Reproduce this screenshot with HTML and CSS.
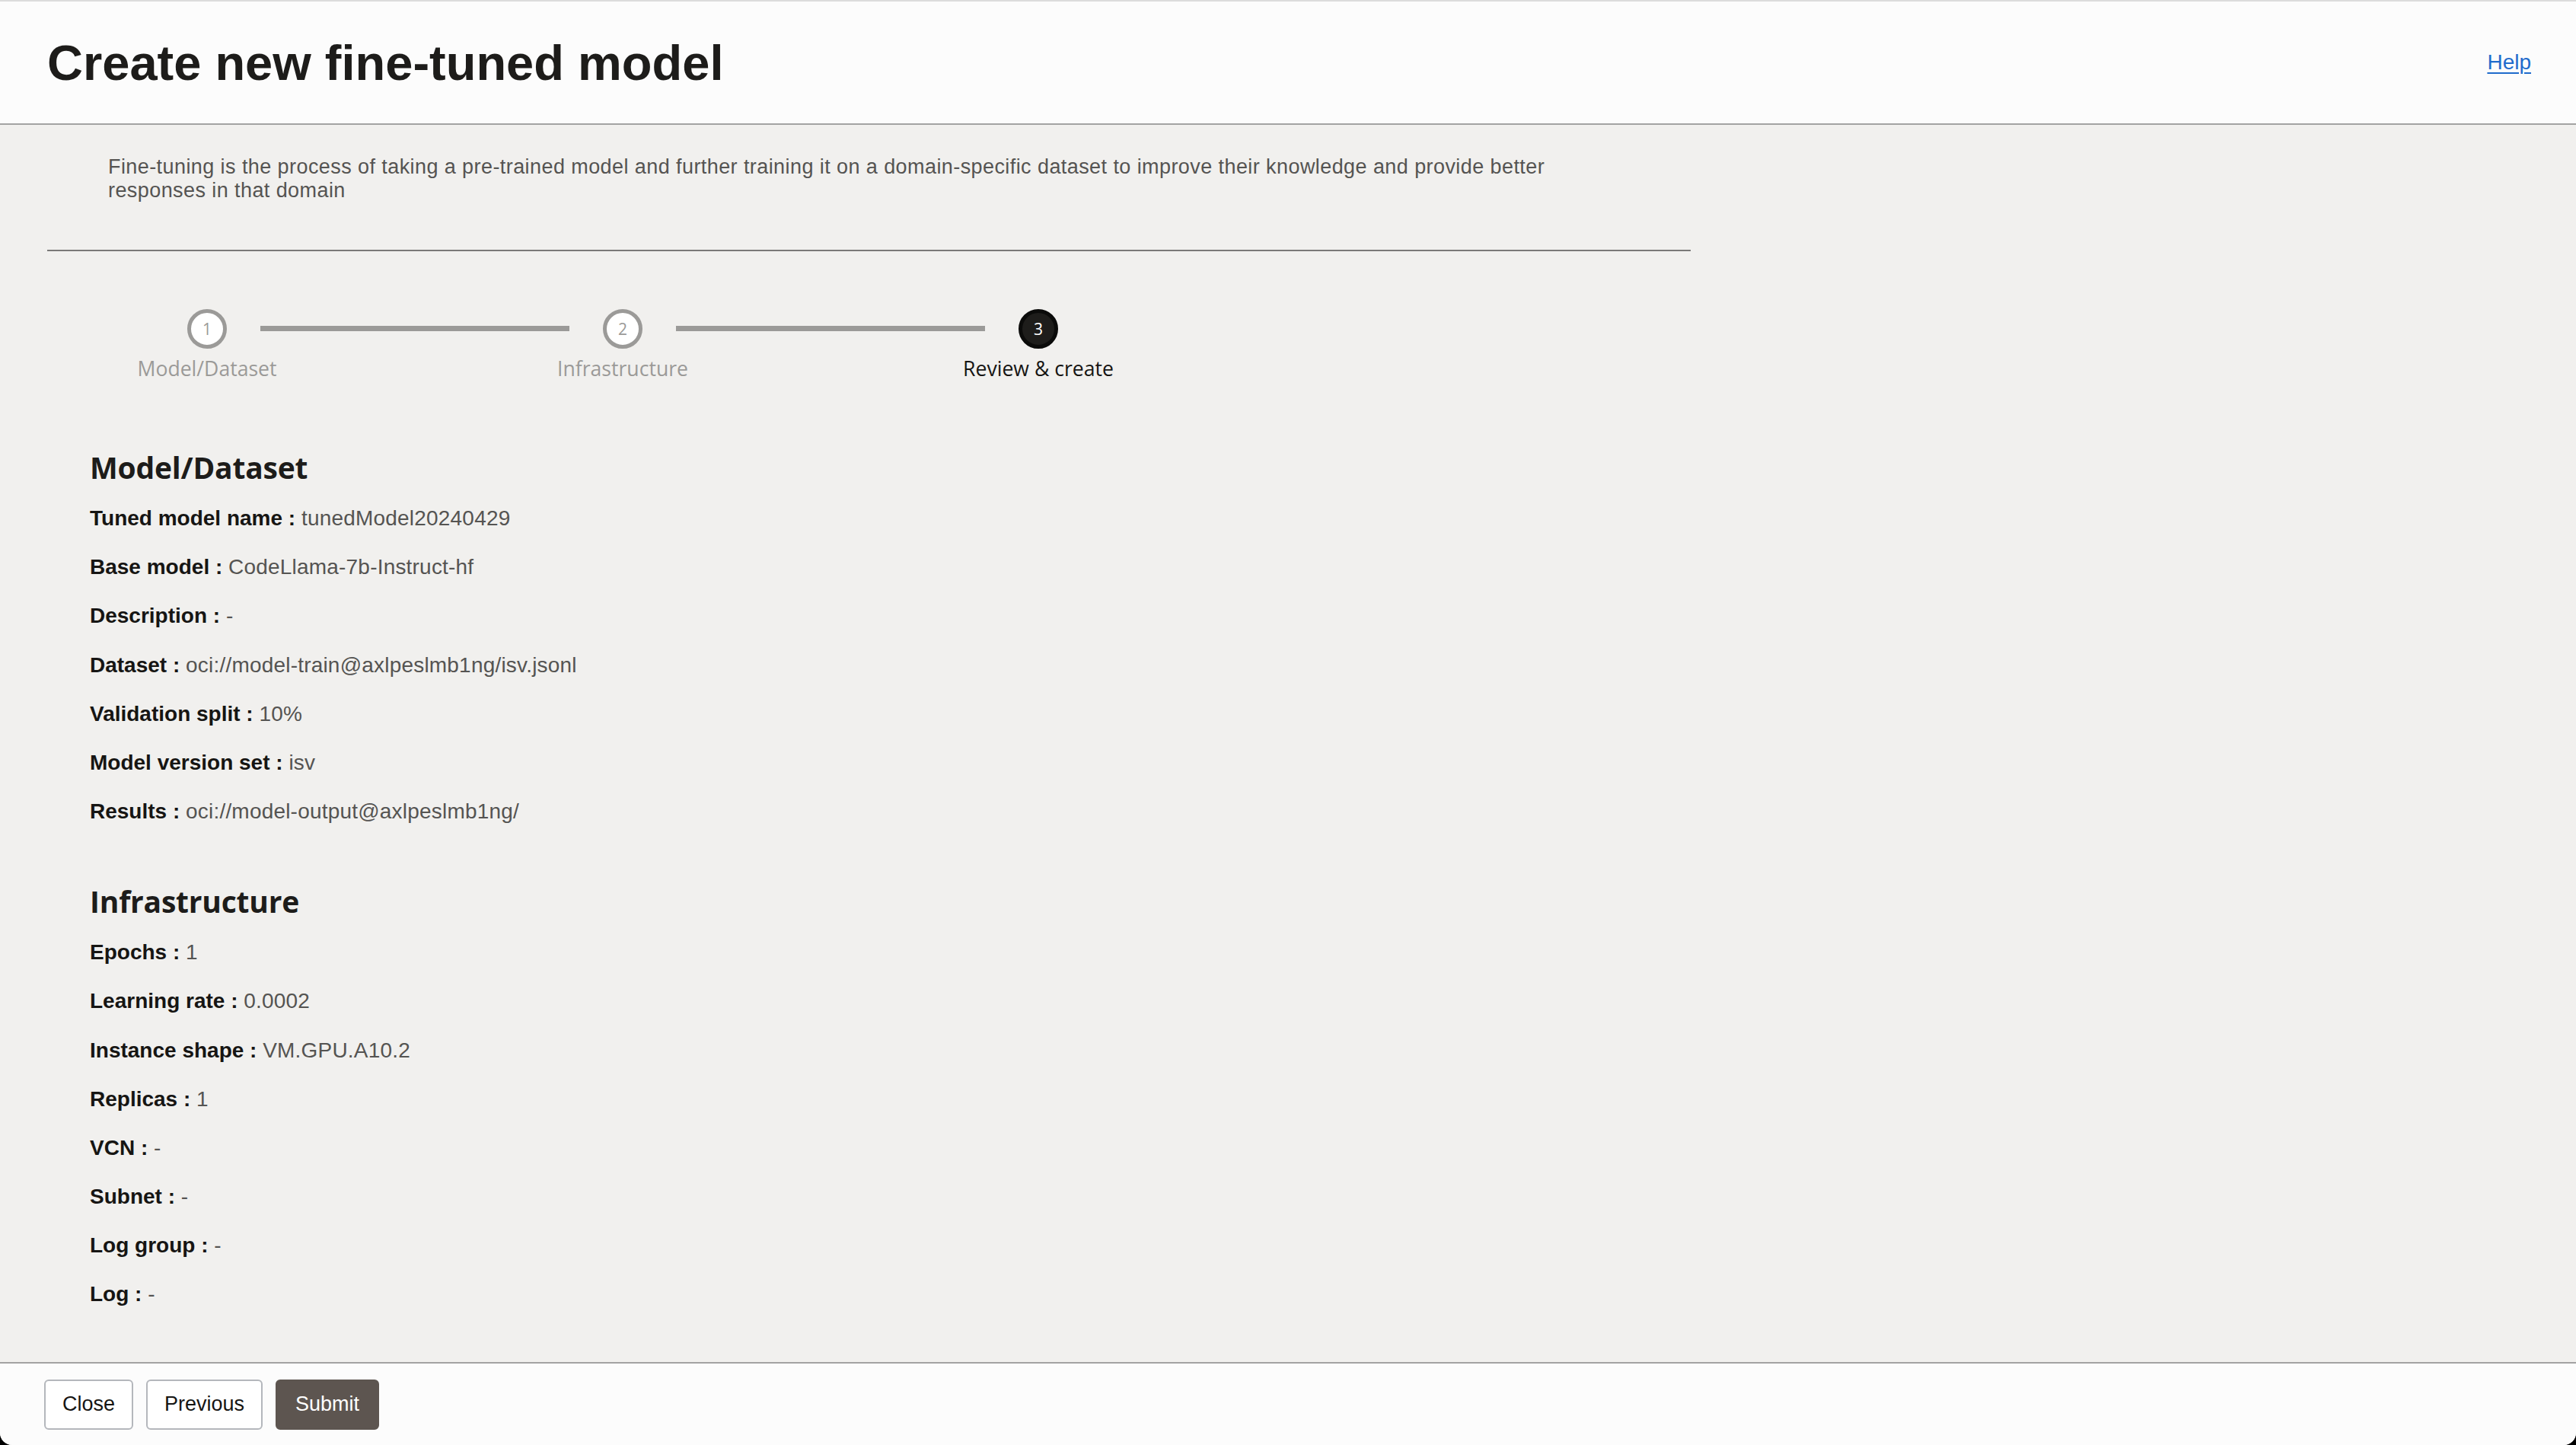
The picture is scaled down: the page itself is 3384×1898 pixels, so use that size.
FILE: index.html
```html
<!DOCTYPE html>
<html lang="en">
<head>
<meta charset="utf-8">
<title>Create new fine-tuned model</title>
<link rel="stylesheet" href="styles.css">
</head>
<body>
<div class="page">
  <header class="header">
    <h1 class="title">Create new fine-tuned model</h1>
    <a class="help" href="#">Help</a>
  </header>
  <main class="main">
    <div class="content">
      <p class="desc">Fine-tuning is the process of taking a pre-trained model and further training it on a domain-specific dataset to improve their knowledge and provide better responses in that domain</p>
      <div class="divider"></div>
      <ol class="stepper">
        <li class="step"><span class="dot">1</span><span class="step-label">Model/Dataset</span></li>
        <li class="connector"></li>
        <li class="step"><span class="dot">2</span><span class="step-label">Infrastructure</span></li>
        <li class="connector"></li>
        <li class="step active"><span class="dot">3</span><span class="step-label">Review &amp; create</span></li>
      </ol>
      <section class="review">
        <h2 class="review-title">Model/Dataset</h2>
        <div class="rows">
          <div class="row"><span class="k">Tuned model name :</span> <span class="v">tunedModel20240429</span></div>
          <div class="row"><span class="k">Base model :</span> <span class="v">CodeLlama-7b-Instruct-hf</span></div>
          <div class="row"><span class="k">Description :</span> <span class="v">-</span></div>
          <div class="row"><span class="k">Dataset :</span> <span class="v">oci://model-train@axlpeslmb1ng/isv.jsonl</span></div>
          <div class="row"><span class="k">Validation split :</span> <span class="v">10%</span></div>
          <div class="row"><span class="k">Model version set :</span> <span class="v">isv</span></div>
          <div class="row"><span class="k">Results :</span> <span class="v">oci://model-output@axlpeslmb1ng/</span></div>
        </div>
      </section>
      <section class="review second">
        <h2 class="review-title">Infrastructure</h2>
        <div class="rows">
          <div class="row"><span class="k">Epochs :</span> <span class="v">1</span></div>
          <div class="row"><span class="k">Learning rate :</span> <span class="v">0.0002</span></div>
          <div class="row"><span class="k">Instance shape :</span> <span class="v">VM.GPU.A10.2</span></div>
          <div class="row"><span class="k">Replicas :</span> <span class="v">1</span></div>
          <div class="row"><span class="k">VCN :</span> <span class="v">-</span></div>
          <div class="row"><span class="k">Subnet :</span> <span class="v">-</span></div>
          <div class="row"><span class="k">Log group :</span> <span class="v">-</span></div>
          <div class="row"><span class="k">Log :</span> <span class="v">-</span></div>
        </div>
      </section>
    </div>
  </main>
  <footer class="footer">
    <button class="btn">Close</button>
    <button class="btn">Previous</button>
    <button class="btn primary">Submit</button>
  </footer>
</div>
</body>
</html>
```

FILE: styles.css
```css
html {
  background: #000;
}
body {
  margin: 0;
  font-family: "Liberation Sans", Arial, sans-serif;
  color: #161513;
}
.page {
  height: 100vh;
  display: flex;
  flex-direction: column;
  background: #f1f0ee;
  border-bottom-left-radius: 16px;
  border-bottom-right-radius: 16px;
  overflow: hidden;
}
.header {
  flex: 0 0 auto;
  height: 160px;
  display: flex;
  align-items: center;
  justify-content: space-between;
  padding: 0 59px 0 62px;
  background: #fcfcfc;
  border-top: 2px solid #dcdcdc;
  border-bottom: 2px solid #a3a3a3;
}
.title {
  margin: 0;
  font-size: 65px;
  font-weight: 700;
  line-height: 1;
  color: #1d1c1a;
  letter-spacing: 0;
}
.help {
  font-size: 28px;
  color: #1f6bcc;
  text-decoration: underline;
  text-underline-offset: 4px;
  text-decoration-thickness: 2px;
}
.main {
  flex: 1 1 auto;
  overflow: hidden;
  padding-left: 62px;
}
.content {
  width: 2159px;
}
.desc {
  margin: 40px 0 0 80px;
  width: 1980px;
  font-size: 27px;
  line-height: 31px;
  letter-spacing: 0.42px;
  color: #555452;
}
.divider {
  margin-top: 62px;
  border-top: 2px solid #7a7978;
}
.stepper {
  list-style: none;
  margin: 76px 0 0 0;
  padding: 0 0 0 140px;
  display: flex;
  align-items: flex-start;
}
.step {
  width: 140px;
  display: flex;
  flex-direction: column;
  align-items: center;
}
.dot {
  box-sizing: border-box;
  width: 52px;
  height: 52px;
  border-radius: 50%;
  border: 5px solid #9b9a98;
  background: #fff;
  color: #9b9a98;
  font-family: "Open Sans", sans-serif;
  font-size: 21px;
  display: flex;
  align-items: center;
  justify-content: center;
}
.step-label {
  margin-top: 8px;
  white-space: nowrap;
  font-family: "Open Sans", sans-serif;
  font-size: 26.6px;
  line-height: 36px;
  color: #9b9a98;
}
.step.active .dot {
  background: #1e1d1b;
  border-color: #0b0b0a;
  color: #fff;
}
.step.active .step-label {
  color: #161513;
}
.connector {
  width: 406px;
  height: 7px;
  margin-top: 22px;
  background: #9b9a98;
}
.review {
  margin: 88px 0 0 56px;
}
.review.second {
  margin-top: 78px;
}
.review-title {
  margin: 0 0 27px 0;
  font-family: "Open Sans", sans-serif;
  font-weight: 700;
  font-size: 39px;
  line-height: 48px;
  color: #1d1c1a;
  letter-spacing: -0.2px;
}
.rows {
  display: flex;
  flex-direction: column;
  gap: 32.2px;
}
.row {
  font-size: 28px;
  line-height: 32px;
  white-space: nowrap;
}
.k {
  font-weight: 700;
  color: #161513;
}
.v {
  color: #555452;
  letter-spacing: 0.2px;
}
.footer {
  flex: 0 0 auto;
  height: 107px;
  display: flex;
  align-items: center;
  gap: 17px;
  padding-left: 58px;
  background: #fcfcfc;
  border-top: 2px solid #a3a3a3;
}
.btn {
  height: 66px;
  padding: 0 22px;
  border: 2px solid #b4b7bc;
  border-radius: 6px;
  background: #fff;
  font-family: "Liberation Sans", Arial, sans-serif;
  font-size: 27px;
  color: #161513;
}
.btn.primary {
  padding: 0 24px;
  background: #5d5550;
  border-color: #5d5550;
  color: #fff;
}
```
